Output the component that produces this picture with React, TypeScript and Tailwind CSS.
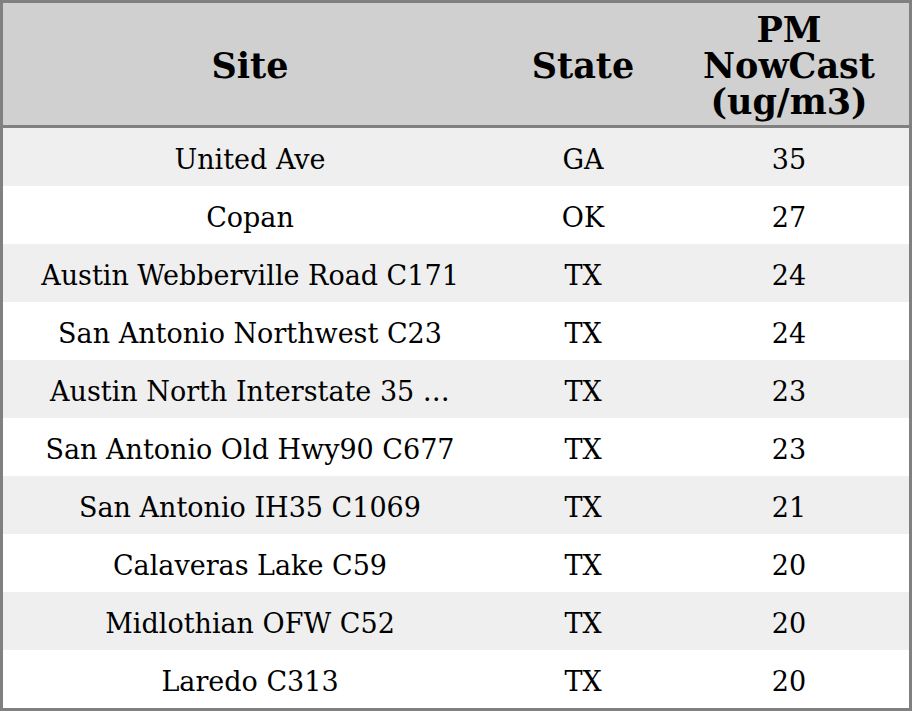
import React from "react";

const rows: [string, string, string][] = [
  ["United Ave", "GA", "35"],
  ["Copan", "OK", "27"],
  ["Austin Webberville Road C171", "TX", "24"],
  ["San Antonio Northwest C23", "TX", "24"],
  ["Austin North Interstate 35 …", "TX", "23"],
  ["San Antonio Old Hwy90 C677", "TX", "23"],
  ["San Antonio IH35 C1069", "TX", "21"],
  ["Calaveras Lake C59", "TX", "20"],
  ["Midlothian OFW C52", "TX", "20"],
  ["Laredo C313", "TX", "20"],
];

export default function App() {
  return (
    <div
      className="w-[912px] h-[711px] border-[3px] border-[#808080] flex flex-col bg-white text-black"
      style={{ fontFamily: '"DejaVu Serif", serif' }}
    >
      <div className="h-[125px] shrink-0 grid grid-cols-[494px_172px_240px] bg-[#d0d0d0] border-b-[3px] border-[#808080] font-bold text-[35px] leading-[36px] pt-[4px]">
        <div className="flex items-center justify-center text-center">Site</div>
        <div className="flex items-center justify-center text-center">State</div>
        <div className="flex items-center justify-center text-center">
          PM
          <br />
          NowCast
          <br />
          (ug/m3)
        </div>
      </div>
      <div className="flex-1 flex flex-col">
        {rows.map((r, i) => (
          <div
            key={i}
            className={`flex-1 grid grid-cols-[494px_172px_240px] text-[27px] leading-[32px] pt-[6px] ${
              i % 2 === 0 ? "bg-[#efefef]" : "bg-white"
            }`}
          >
            <div className="flex items-center justify-center whitespace-nowrap">{r[0]}</div>
            <div className="flex items-center justify-center">{r[1]}</div>
            <div className="flex items-center justify-center">{r[2]}</div>
          </div>
        ))}
      </div>
    </div>
  );
}
